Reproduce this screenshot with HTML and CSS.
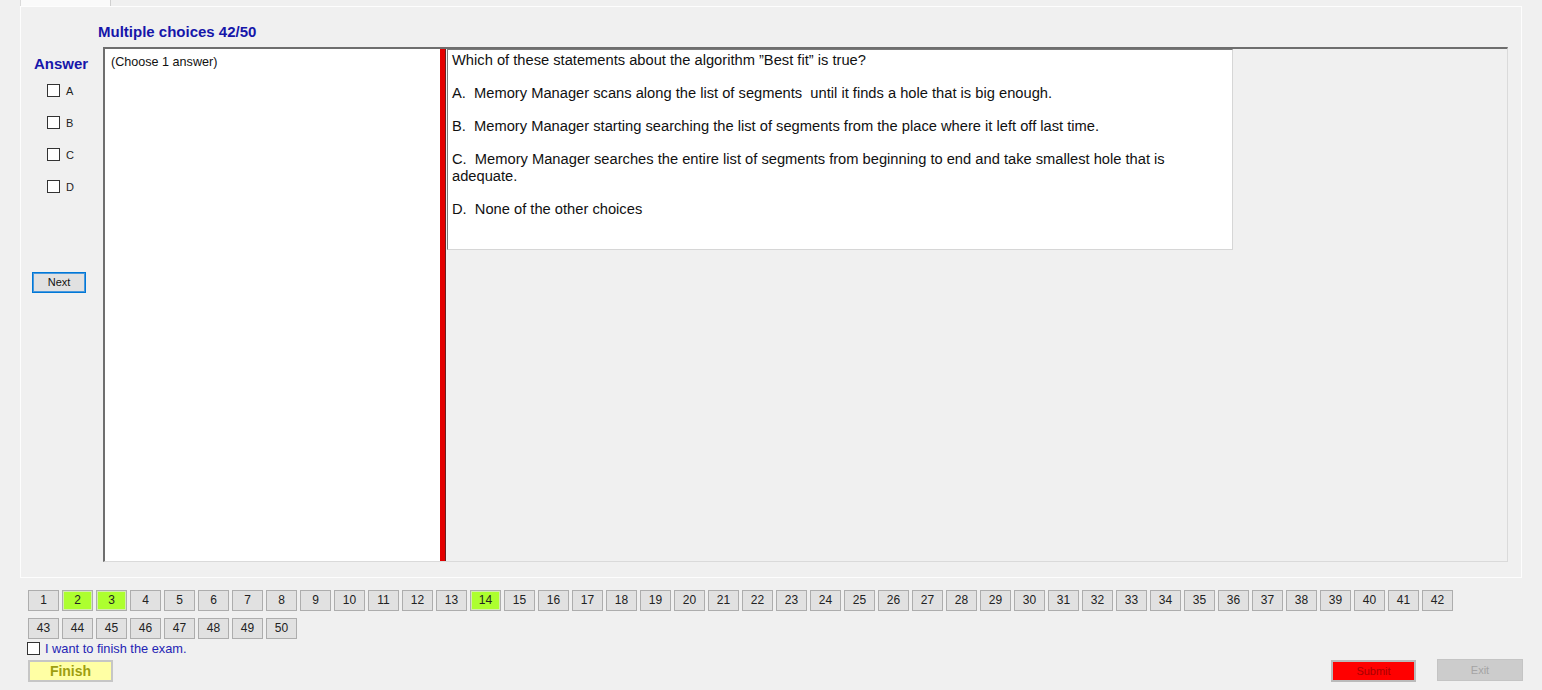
FILE: index.html
```html
<!DOCTYPE html>
<html>
<head>
<meta charset="utf-8">
<title>Exam</title>
<link rel="stylesheet" href="styles.css">
</head>
<body>
<div class="tabstrip"><div class="tab"></div></div>
<div class="page">
  <div class="title">Multiple choices 42/50</div>
  <div class="main">
    <div class="answer-col">
      <div class="answer-label">Answer</div>
      <div class="choices">
        <label class="choice"><span class="box"></span><span>A</span></label>
        <label class="choice"><span class="box"></span><span>B</span></label>
        <label class="choice"><span class="box"></span><span>C</span></label>
        <label class="choice"><span class="box"></span><span>D</span></label>
      </div>
      <div class="next-btn">Next</div>
    </div>
    <div class="split">
      <div class="left-pane">(Choose 1 answer)</div>
      <div class="splitter"></div>
      <div class="right-pane">
        <div class="question">
          <p>Which of these statements about the algorithm ”Best fit” is true?</p>
          <p>A.  Memory Manager scans along the list of segments  until it finds a hole that is big enough.</p>
          <p>B.  Memory Manager starting searching the list of segments from the place where it left off last time.</p>
          <p>C.  Memory Manager searches the entire list of segments from beginning to end and take smallest hole that is<br>adequate.</p>
          <p>D.  None of the other choices</p>
        </div>
      </div>
    </div>
  </div>
</div>
<div class="nums">
  <div class="num">1</div><div class="num done">2</div><div class="num done">3</div><div class="num">4</div><div class="num">5</div><div class="num">6</div><div class="num">7</div><div class="num">8</div><div class="num">9</div><div class="num">10</div>
  <div class="num">11</div><div class="num">12</div><div class="num">13</div><div class="num done">14</div><div class="num">15</div><div class="num">16</div><div class="num">17</div><div class="num">18</div><div class="num">19</div><div class="num">20</div>
  <div class="num">21</div><div class="num">22</div><div class="num">23</div><div class="num">24</div><div class="num">25</div><div class="num">26</div><div class="num">27</div><div class="num">28</div><div class="num">29</div><div class="num">30</div>
  <div class="num">31</div><div class="num">32</div><div class="num">33</div><div class="num">34</div><div class="num">35</div><div class="num">36</div><div class="num">37</div><div class="num">38</div><div class="num">39</div><div class="num">40</div>
  <div class="num">41</div><div class="num">42</div><div class="num">43</div><div class="num">44</div><div class="num">45</div><div class="num">46</div><div class="num">47</div><div class="num">48</div><div class="num">49</div><div class="num">50</div>
</div>
<label class="finish-check"><span class="box"></span><span>I want to finish the exam.</span></label>
<div class="bottom">
  <div class="finish-btn">Finish</div>
  <div class="spacer"></div>
  <div class="submit-btn">Submit</div>
  <div class="exit-btn">Exit</div>
</div>
</body>
</html>
```
FILE: styles.css
```css
html, body {
  margin: 0;
  padding: 0;
}
body {
  width: 1542px;
  height: 690px;
  overflow: hidden;
  background: #f0f0f0;
  font-family: "Liberation Sans", Arial, sans-serif;
  color: #000;
}
.tabstrip {
  height: 6px;
  padding-left: 20px;
  display: flex;
}
.tab {
  width: 91px;
  height: 6px;
  box-sizing: border-box;
  background: #fafafa;
  border-left: 1px solid #dadada;
  border-right: 1px solid #d0d0d0;
}
.page {
  margin-left: 20px;
  width: 1502px;
  height: 572px;
  box-sizing: border-box;
  border: 1px solid #fdfdfd;
  padding-top: 17px;
}
.title {
  margin-left: 77px;
  font-size: 15px;
  font-weight: bold;
  line-height: 16px;
  color: #1616aa;
}
.main {
  display: flex;
  margin-top: 7px;
}
.answer-col {
  width: 82px;
  flex: none;
}
.answer-label {
  padding-left: 13px;
  padding-top: 9px;
  font-size: 15px;
  font-weight: bold;
  line-height: 16px;
  color: #1616aa;
}
.choices {
  margin-top: 12px;
  padding-left: 26px;
  display: flex;
  flex-direction: column;
  gap: 19px;
}
.choice {
  display: flex;
  align-items: center;
  height: 13px;
  gap: 6px;
  font-size: 11px;
  color: #222;
}
.box {
  display: inline-block;
  width: 13px;
  height: 13px;
  box-sizing: border-box;
  border: 1px solid #333;
  background: #fff;
  flex: none;
}
.next-btn {
  margin-top: 79px;
  margin-left: 11px;
  width: 54px;
  height: 21px;
  box-sizing: border-box;
  border: 1px solid #0078d7;
  box-shadow: inset 0 0 0 1px #4a98dc;
  background: #e1e1e1;
  font-size: 11px;
  line-height: 19px;
  text-align: center;
  color: #111;
}
.split {
  display: flex;
  width: 1405px;
  height: 515px;
  box-sizing: border-box;
  border-top: 2px solid #6e6e6e;
  border-left: 2px solid #6e6e6e;
  border-bottom: 1px solid #dadada;
  border-right: 1px solid #dadada;
}
.left-pane {
  width: 335px;
  flex: none;
  background: #fff;
  padding: 6px 6px;
  box-sizing: border-box;
  font-size: 12.6px;
  line-height: 14px;
  color: #111;
}
.splitter {
  width: 5px;
  flex: none;
  background: #e40000;
  border-right: 1px solid #6a2020;
}
.right-pane {
  flex: 1;
  padding-left: 1px;
}
.question {
  width: 786px;
  height: 201px;
  box-sizing: border-box;
  background: #fff;
  border: 1px solid;
  border-color: #7a7a7a #d6d6d6 #d6d6d6 #7a7a7a;
  padding: 2px 4px;
  font-size: 14.7px;
  line-height: 16.5px;
  color: #111;
}
.question p {
  margin: 0 0 16.5px 0;
  white-space: pre-wrap;
}
.nums {
  margin: 12px 0 0 28px;
  width: 1428px;
  display: flex;
  flex-wrap: wrap;
  gap: 7px 3px;
}
.num {
  width: 31px;
  height: 21px;
  box-sizing: border-box;
  border: 1px solid #adadad;
  background: #e1e1e1;
  font-size: 12px;
  line-height: 19px;
  text-align: center;
  color: #222;
}
.num.done {
  background: #adff2f;
  box-shadow: inset 0 0 0 1px #d4ecb0;
}
.finish-check {
  margin: 3px 0 0 27px;
  display: flex;
  align-items: center;
  gap: 5px;
  height: 13px;
  font-size: 12.8px;
  color: #2424b4;
}
.bottom {
  display: flex;
  margin: 5px 0 0 28px;
  width: 1495px;
  align-items: flex-start;
}
.spacer {
  flex: 1;
}
.finish-btn {
  width: 85px;
  height: 22px;
  box-sizing: border-box;
  border: 2px solid #c6c6c6;
  background: #ffffa4;
  font-size: 14px;
  font-weight: bold;
  line-height: 18px;
  text-align: center;
  color: #9e9e10;
}
.submit-btn {
  width: 85px;
  height: 22px;
  box-sizing: border-box;
  border: 2px solid #bababa;
  background: #ff0000;
  font-size: 11px;
  line-height: 18px;
  text-align: center;
  color: #a80000;
}
.exit-btn {
  margin-left: 21px;
  margin-top: -1px;
  width: 86px;
  height: 22px;
  box-sizing: border-box;
  border: 1px solid #c4c4c4;
  background: #cccccc;
  font-size: 11px;
  line-height: 20px;
  text-align: center;
  color: #a4a4a4;
}
```
